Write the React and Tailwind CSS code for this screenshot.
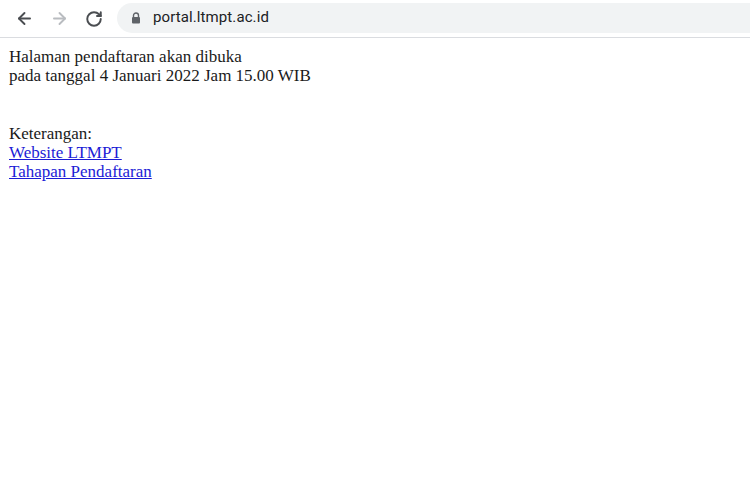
import React from 'react';
import { ArrowLeft, ArrowRight, RotateCw } from 'lucide-react';

const App = () => {
  return (
    <div className="w-[750px] h-[500px] bg-white overflow-hidden">
      {/* browser bar */}
      <div className="h-[38px] flex items-center border-b border-[#dadce0] bg-white">
        <div className="flex items-center pl-[15px] gap-[16px] text-[#4a4d51]">
          <ArrowLeft className="w-[19px] h-[19px]" strokeWidth={2.4} />
          <ArrowRight className="w-[19px] h-[19px] text-[#b9bcc0]" strokeWidth={2.4} />
          <RotateCw className="w-[18px] h-[18px]" strokeWidth={2.6} />
        </div>
        <div className="ml-[14px] flex-1 h-[30px] mt-[-2px] bg-[#f1f3f4] rounded-l-full flex items-center pl-[14px]">
          <svg width="10" height="12" viewBox="0 0 10 12" className="mr-[12px]">
            <path d="M2.5 5V3.5a2.5 2.5 0 0 1 5 0V5" fill="none" stroke="#5f6368" strokeWidth="1.4" />
            <rect x="1" y="5" width="8" height="6.5" rx="1" fill="#5f6368" />
          </svg>
          <span className="text-[15px] text-[#202124] font-['Roboto','Open_Sans',sans-serif] tracking-[0.1px]">portal.ltmpt.ac.id</span>
        </div>
      </div>

      {/* page */}
      <div className="pt-[9px] pl-[9px] font-['Liberation_Serif','Times_New_Roman',serif] text-[17px] leading-[19px] text-[#1a1a1a]">
        <p>Halaman pendaftaran akan dibuka</p>
        <p>pada tanggal 4 Januari 2022 Jam 15.00 WIB</p>
        <br />
        <br />
        <p className="mt-[1px]">Keterangan:</p>
        <a href="#" className="block w-fit text-[#1c1cd6] underline">Website LTMPT</a>
        <a href="#" className="block w-fit text-[#1c1cd6] underline">Tahapan Pendaftaran</a>
      </div>
    </div>
  );
};

export default App;
